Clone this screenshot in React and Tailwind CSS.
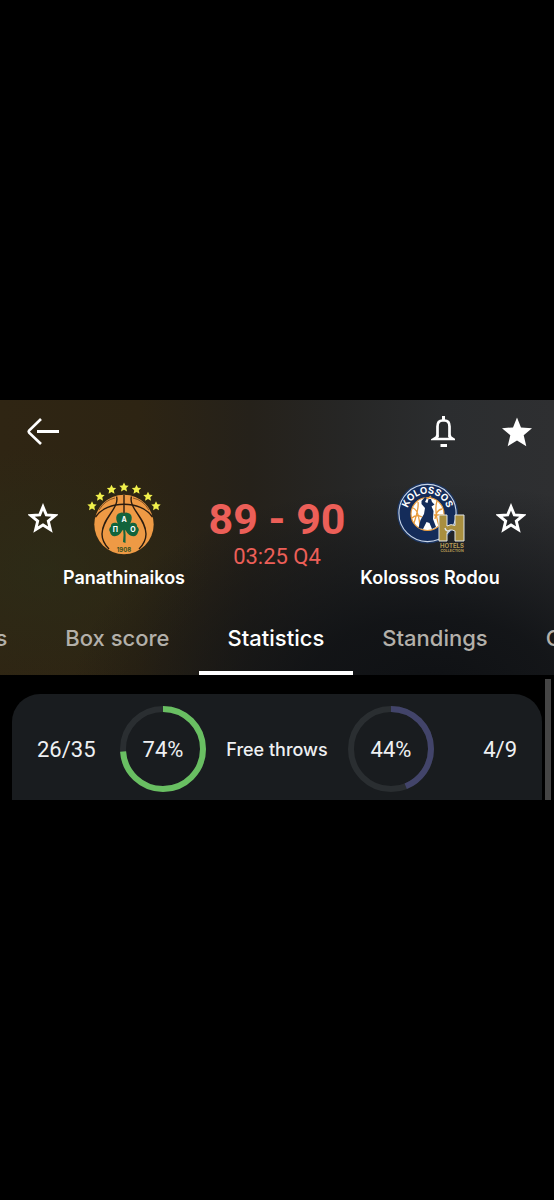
const STAR =
  "M15 0.5 L19 10.4 L30 11.2 L21.7 18.2 L24.3 29.2 L15 23.4 L5.7 29.2 L8.3 18.2 L0 11.2 L11 10.4 Z"
const STAR_OUTLINE =
  "M15 3.8 L18.3 11.9 L27 12.5 L20.3 18.1 L22.4 26.6 L15 22 L7.6 26.6 L9.7 18.1 L3 12.5 L11.7 11.9 Z"
const SMALL_STAR =
  "M0 -4.8 L1.5 -1.8 L4.7 -1.5 L2.3 0.8 L3 4.2 L0 2.5 L-3 4.2 L-2.3 0.8 L-4.7 -1.5 L-1.5 -1.8 Z"

const tabs = ["s", "Box score", "Statistics", "Standings", "O"]

function BackIcon() {
  return (
    <svg width="34" height="30" viewBox="0 0 34 30" fill="none" stroke="white" strokeWidth="2.7">
      <path d="M15 2 L3.1 13.6 Q2.3 14.6 3.1 15.6 L15 27" />
      <path d="M11 14.5 H33" strokeWidth="3" />
    </svg>
  )
}

function BellIcon() {
  return (
    <svg width="24" height="32" viewBox="0 0 24 32" fill="none" stroke="white" strokeWidth="2.7">
      <path d="M12.5 0 V5" strokeWidth="3" />
      <path d="M6.5 21.5 V10.5 Q6.5 4.5 11.5 4.5 H13.5 Q18.5 4.5 18.5 10.5 V21.5" />
      <path d="M6.5 19 L5.5 21.5 L3 23 H22 L19.5 21.5 L18.5 19" />
      <path d="M9.5 29.5 H16" strokeWidth="3" />
    </svg>
  )
}

function StarIcon({ filled }) {
  return (
    <svg width="30" height="30" viewBox="0 0 30 30">
      {filled ? (
        <path d={STAR} fill="white" />
      ) : (
        <path d={STAR_OUTLINE} fill="none" stroke="white" strokeWidth="2.9" />
      )}
    </svg>
  )
}

function PanathinaikosLogo() {
  const stars = [
    [4, 23],
    [12, 13.5],
    [23.5, 6.5],
    [36, 4.2],
    [48.5, 6.5],
    [60, 13.5],
    [68, 23],
  ]
  return (
    <svg width="73" height="73" viewBox="0 0 73 73" className="overflow-visible">
      {stars.map(([x, y]) => (
        <path key={x} d={SMALL_STAR} transform={`translate(${x} ${y})`} fill="#f1f04c" />
      ))}
      <circle cx="36" cy="41.5" r="29.7" fill="#ee9a45" />
      <g fill="none" stroke="#2a1c10" strokeWidth="1.4">
        <path d="M36 12 V32" />
        <path d="M28.5 13.5 C32 25 14 35 14 51 Q14 59 21 66" />
        <path d="M43.5 13.5 C40 25 58 35 58 51 Q58 59 51 66" />
        <path d="M7.5 34 C19 17 53 17 64.5 34" />
      </g>
      <g fill="none" stroke="#6b4420" strokeWidth="0.8">
        <path d="M11 27 Q17 17 27 15" />
        <path d="M61 27 Q55 17 45 15" />
      </g>
      <g fill="#12643c">
        <path d="M36 47 C27 41 26 31 32 30 Q35 28.7 36 31 Q37 28.7 40 30 C46 31 45 41 36 47 Z" />
        <path d="M36 46 C32 38 22 38 23 43.5 Q20 46 22 49 Q23 54 28 53 C33 52 33 48 36 46 Z" />
        <path d="M36 46 C40 38 50 38 49 43.5 Q52 46 50 49 Q49 54 44 53 C39 52 39 48 36 46 Z" />
        <path d="M35 45 H37 Q38 52 37.5 60 L35 59 Q36 51 35 45 Z" />
      </g>
      <g
        fill="white"
        textAnchor="middle"
        fontFamily="Inter, sans-serif"
        fontWeight="700"
        fontSize="7"
      >
        <text x="36" y="39">A</text>
        <text x="27.3" y="48.6">Π</text>
        <text x="45" y="48.6">O</text>
      </g>
      <text
        x="36"
        y="68.5"
        fill="#38511f"
        textAnchor="middle"
        fontFamily="Inter, sans-serif"
        fontWeight="700"
        fontSize="6"
      >
        1908
      </text>
    </svg>
  )
}

function KolossosLogo() {
  return (
    <svg width="73" height="73" viewBox="0 0 73 73" className="overflow-visible">
      <circle cx="33.5" cy="30" r="30.5" fill="#1c3560" />
      <circle cx="33.5" cy="30" r="28.6" fill="#142c5a" stroke="#c7d5e8" strokeWidth="1.1" />
      <circle cx="33.5" cy="31" r="16.5" fill="#fff" stroke="#e89b3c" strokeWidth="1.2" />
      <g fill="none" stroke="#e89b3c" strokeWidth="1.3">
        <path d="M19 25 Q25 27 26 45 M18 35 Q22 31 28 34 M24 19 Q25 25 20 40" />
        <path d="M43 18 Q40 27 45 43 M48 26 Q42 27 41 36 M40 32 H49" />
      </g>
      <path
        d="M31 14 L27.5 18 L27.5 21 L31 25 L30 31 L26.5 37 L24.5 45 L29 46 L32.5 39 L35.5 40 L38 46 L42 44 L39 36 L39.5 28 L37.5 23.5 L40.5 21.5 L38 19 L37 16 L34.5 16 L33.5 20 L31 19 L33 15 Z"
        fill="#142c5a"
      />
      <path d="M37 13 L33 16" stroke="#e89b3c" strokeWidth="1.4" />
      <path id="kolossos-arc" d="M13 31 A20.5 20.5 0 0 1 54 31" fill="none" />
      <text
        fill="white"
        fontFamily="Inter, sans-serif"
        fontWeight="700"
        fontSize="9.5"
        textAnchor="middle"
      >
        <textPath href="#kolossos-arc" startOffset="50%">
          KOLOSSOS
        </textPath>
      </text>
      <g fill="#a98f3f" stroke="#dfe4e8" strokeWidth="1">
        <path d="M45 32 H53 V43 Q57 40.5 61 42.5 V32 H70 V58 H61 V48 Q55 45 53 50 V58 H45 Z" />
        <path d="M51 45 Q52 49 56 47.5" fill="none" strokeWidth="1.4" />
      </g>
      <g fill="#b59a56" textAnchor="middle" fontFamily="Inter, sans-serif" fontWeight="700">
        <text x="58" y="65" fontSize="6">
          HOTELS
        </text>
        <text x="58" y="69" fontSize="3.6">
          COLLECTION
        </text>
      </g>
    </svg>
  )
}

function Team({ name, logo, reverse }) {
  return (
    <div className={reverse ? "flex flex-row-reverse gap-1" : "flex gap-1"}>
      <button aria-label={`Follow ${name}`} className="mt-5 h-[30px] shrink-0">
        <StarIcon />
      </button>
      <div className="flex w-[124px] flex-col items-center">
        {logo}
        <h2 className="mt-3 whitespace-nowrap text-[18px] leading-5 font-semibold text-white">
          {name}
        </h2>
      </div>
    </div>
  )
}

function Ring({ percent, color }) {
  return (
    <div className="relative flex size-[86px] items-center justify-center">
      <svg viewBox="0 0 86 86" className="absolute inset-0 -rotate-90" fill="none" strokeWidth="6">
        <circle cx="43" cy="43" r="40" stroke="#2a2e31" />
        <circle
          cx="43"
          cy="43"
          r="40"
          stroke={color}
          pathLength="100"
          strokeDasharray={`${percent} 100`}
        />
      </svg>
      <span className="relative font-[Roboto,sans-serif] text-[22px]">{percent}%</span>
    </div>
  )
}

export default function App() {
  return (
    <div className="flex min-h-screen w-full flex-col justify-center overflow-hidden bg-black font-[Inter,sans-serif]">
      <header className="bg-[radial-gradient(ellipse_65%_75%_at_78%_105%,#0f1114_0%,rgba(15,17,20,0.85)_35%,transparent_100%),radial-gradient(ellipse_30%_45%_at_8%_62%,rgba(44,45,24,0.7)_0%,transparent_100%),linear-gradient(to_right,#2f2513_0%,#2d2413_25%,#25211a_45%,#262625_62%,#2b2d2f_80%,#2e2f31_100%)]">
        <div className="flex items-center justify-between pt-4 pr-[22px] pl-[26px]">
          <button aria-label="Back">
            <BackIcon />
          </button>
          <div className="flex items-center gap-[47px]">
            <button aria-label="Notifications">
              <BellIcon />
            </button>
            <button aria-label="Favourite">
              <StarIcon filled />
            </button>
          </div>
        </div>

        <div className="flex justify-between px-7 pt-[35px]">
          <Team name="Panathinaikos" logo={<PanathinaikosLogo />} />
          <div className="flex flex-col items-center pt-4 font-[Roboto,sans-serif] whitespace-nowrap text-[#ec5f58]">
            <span className="text-[43px] leading-10 font-bold">89 - 90</span>
            <span className="mt-1 text-[22px] leading-7">03:25 Q4</span>
          </div>
          <Team name="Kolossos Rodou" logo={<KolossosLogo />} reverse />
        </div>

        <nav className="mt-3.5 flex justify-center pl-1">
          {tabs.map((tab) => (
            <a
              key={tab}
              href="#"
              className={
                tab === "Statistics"
                  ? "shrink-0 border-b-4 border-white px-[29px] pt-[22px] pb-[19px] text-[22px] leading-7 font-medium text-white"
                  : "shrink-0 border-b-4 border-transparent px-[29px] pt-[22px] pb-[19px] text-[22px] leading-7 font-medium text-[#b3b0aa]"
              }
            >
              {tab}
            </a>
          ))}
        </nav>
      </header>

      <main className="flex pl-3">
        <section className="mt-[19px] grid flex-1 grid-cols-[1fr_86px_142px_86px_1fr] items-center rounded-t-[28px] bg-[#191c1f] px-[25px] pt-3 pb-2 text-[#eef0f2]">
          <span className="font-[Roboto,sans-serif] text-[22px]">26/35</span>
          <Ring percent={74} color="#69bf62" />
          <span className="text-center text-[18px] font-medium">Free throws</span>
          <Ring percent={44} color="#42446a" />
          <span className="text-right font-[Roboto,sans-serif] text-[22px]">4/9</span>
        </section>
        <div className="mt-1 mr-[3px] ml-[3px] w-1.5 bg-[#454545]" />
      </main>
    </div>
  )
}
